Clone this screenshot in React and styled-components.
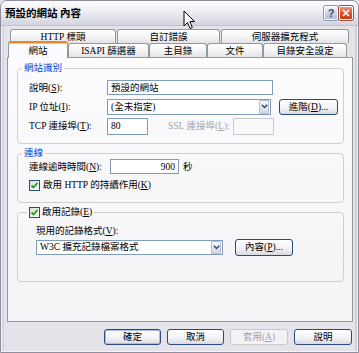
import React from "react";
import styled, { createGlobalStyle } from "styled-components";

const EstiloGlobal = createGlobalStyle`
  html, body { margin: 0; padding: 0; }
  body {
    background: #e4e3ea;
    font-family: "Liberation Serif", "Noto Sans CJK TC", serif;
    font-size: 9.5px;
    color: #000;
  }
`;

const Ventana = styled.div`
  position: relative;
  width: 359px;
  height: 353px;
  box-sizing: border-box;
  display: flex;
  flex-direction: column;
  background: #e4e3ea;
  border: 1px solid #8e8e9e;
  border-radius: 7px 7px 0 0;
  box-shadow: inset 0 0 0 1px #f4f4f8, inset -3px 0 0 #cfcfd9, inset 3px 0 0 #d6d6de;
  overflow: hidden;
`;

const BarraTitulo = styled.div`
  height: 25px;
  flex: none;
  box-sizing: border-box;
  display: flex;
  align-items: center;
  padding: 0 5px 0 4px;
  background: linear-gradient(#fdfdff 0%, #ededf3 45%, #d3d4de 100%);
  border-bottom: 1px solid #c2c2ce;
`;

const Titulo = styled.span`
  flex: 1;
  font-family: "Noto Sans CJK TC", sans-serif;
  font-weight: bold;
  font-size: 10.5px;
  line-height: 14px;
`;

const BotonVentana = styled.div`
  width: 14px;
  height: 14px;
  box-sizing: border-box;
  margin-left: 1px;
  display: flex;
  align-items: center;
  justify-content: center;
  border: 1px solid #fff;
  border-radius: 2px;
  background: ${(p) =>
    p.$cerrar
      ? "linear-gradient(#f09478, #d8532f 55%, #c23a18)"
      : "linear-gradient(#f2f5fc, #c9d3e8 55%, #aebbd8)"};
  box-shadow: 0 0 0 1px ${(p) => (p.$cerrar ? "#b04a30" : "#8d98b6")};
  font-family: "Liberation Sans", sans-serif;
  font-weight: bold;
  font-size: 11px;
  color: #3c4a6a;
`;

const Cuerpo = styled.div`
  flex: 1;
  display: flex;
  flex-direction: column;
  padding: 3px 5px 0 6px;
`;

const FilaPestanas = styled.div`
  display: flex;
  height: 14px;
  gap: ${(p) => p.$gap || 0}px;
  padding-left: ${(p) => p.$izq}px;
`;

const Pestana = styled.div`
  box-sizing: border-box;
  width: ${(p) => p.$w}px;
  height: 14px;
  flex: none;
  display: flex;
  align-items: center;
  justify-content: center;
  border: 1px solid #919b9c;
  border-bottom: none;
  border-radius: 3px 3px 0 0;
  background: linear-gradient(#ffffff, #f4f4f4 55%, #e3e3e8);
  line-height: 12px;
  white-space: nowrap;
`;

const PestanaActiva = styled(Pestana)`
  height: 17px;
  margin-top: -2px;
  position: relative;
  z-index: 1;
  border-top: 2px solid #e68b2c;
  box-shadow: inset 0 1px 0 #ffc83c;
  background: #fcfcfe;
`;

const Panel = styled.div`
  box-sizing: border-box;
  height: 265px;
  flex: none;
  border: 1px solid #919b9c;
  background: linear-gradient(#fcfcfe, #f3f3f6);
  padding: 4px 8px 0 9px;
  display: flex;
  flex-direction: column;
  gap: 3px;
`;

const Grupo = styled.fieldset`
  margin: 0;
  min-width: 0;
  border: 1px solid #d0d0c4;
  border-radius: 4px;
  padding: ${(p) => p.$pt || 0}px 8px ${(p) => p.$pb}px ${(p) => p.$pl}px;
`;

const Leyenda = styled.legend`
  padding: 0 2px;
  margin-left: ${(p) => p.$ml}px;
  color: ${(p) => (p.$azul ? "#0046d5" : "#000")};
  line-height: 12px;
  height: 12px;
  display: flex;
  align-items: center;
  gap: 2px;
`;

const Fila = styled.div`
  display: flex;
  align-items: center;
  height: ${(p) => p.$h || 19}px;
  gap: ${(p) => p.$gap || 0}px;
`;

const Etiqueta = styled.span`
  width: ${(p) => (p.$w ? `${p.$w}px` : "auto")};
  flex: none;
  white-space: nowrap;
  line-height: 12px;
  margin-left: ${(p) => p.$ml || 0}px;
  color: ${(p) => (p.$off ? "#a4a4ac" : "#000")};
`;

const Campo = styled.div`
  box-sizing: border-box;
  width: ${(p) => p.$w}px;
  height: ${(p) => p.$h || 15}px;
  flex: none;
  display: flex;
  align-items: center;
  justify-content: ${(p) => (p.$der ? "flex-end" : "flex-start")};
  padding: 0 3px;
  border: 1px solid ${(p) => (p.$off ? "#c9c9d0" : "#7f9db9")};
  background: ${(p) => (p.$off ? "transparent" : "#fff")};
  line-height: 12px;
  white-space: nowrap;
`;

const Lista = styled(Campo)`
  padding-right: 1px;
  justify-content: space-between;
`;

const Flecha = styled.div`
  width: 10px;
  height: ${(p) => p.$h}px;
  box-sizing: border-box;
  display: flex;
  align-items: center;
  justify-content: center;
  border: 1px solid #b7bccb;
  border-radius: 1px;
  background: linear-gradient(#f6f7fb, #d4d8e4);
`;

const Boton = styled.div`
  box-sizing: border-box;
  width: ${(p) => p.$w || 57}px;
  height: ${(p) => p.$h || 16}px;
  flex: none;
  margin-left: ${(p) => p.$ml || 0}px;
  display: flex;
  align-items: center;
  justify-content: center;
  border: 1px solid ${(p) => (p.$off ? "#c9c8cf" : "#2c4a78")};
  border-radius: 3px;
  background: ${(p) =>
    p.$off ? "#f3f2f6" : "linear-gradient(#ffffff, #f1f1f5 60%, #d9d9e3)"};
  box-shadow: ${(p) => (p.$defecto ? "inset 0 0 0 1px #a9c0ea" : "none")};
  color: ${(p) => (p.$off ? "#a6a5ad" : "#000")};
  line-height: 12px;
  white-space: nowrap;
`;

const CajaMarca = styled.div`
  width: 11px;
  height: 11px;
  box-sizing: border-box;
  flex: none;
  display: flex;
  align-items: center;
  justify-content: center;
  border: 1px solid #1c5180;
  background: linear-gradient(135deg, #dcdcd7, #ffffff);
`;

const FilaBotones = styled.div`
  display: flex;
  justify-content: flex-end;
  gap: 6px;
  margin-top: 7px;
  padding-right: 1px;
`;

const Puntero = styled.svg`
  position: absolute;
  left: 182px;
  top: 9px;
`;

const Tecla = ({ k }) => <u>{k}</u>;

const Marca = () => (
  <CajaMarca>
    <svg width="9" height="9" viewBox="0 0 9 9">
      <path d="M1.5 4.5 L3.5 6.5 L7.5 1.8" fill="none" stroke="#21a121" strokeWidth="1.8" />
    </svg>
  </CajaMarca>
);

const FlechaAbajo = ({ h }) => (
  <Flecha $h={h}>
    <svg width="7" height="5" viewBox="0 0 7 5">
      <path d="M0.8 0.8 L3.5 3.6 L6.2 0.8" fill="none" stroke="#34466a" strokeWidth="1.4" />
    </svg>
  </Flecha>
);

export default function App() {
  return (
    <>
      <EstiloGlobal />
      <Ventana>
        <BarraTitulo>
          <Titulo>預設的網站 內容</Titulo>
          <BotonVentana>?</BotonVentana>
          <BotonVentana $cerrar>
            <svg width="8" height="8" viewBox="0 0 8 8">
              <path d="M1 1 L7 7 M7 1 L1 7" stroke="#fff" strokeWidth="1.6" />
            </svg>
          </BotonVentana>
        </BarraTitulo>

        <Cuerpo>
          <FilaPestanas $izq={3} $gap={1}>
            <Pestana $w={106}>HTTP 標頭</Pestana>
            <Pestana $w={103}>自訂錯誤</Pestana>
            <Pestana $w={128}>伺服器擴充程式</Pestana>
          </FilaPestanas>
          <FilaPestanas $izq={1}>
            <PestanaActiva $w={60}>網站</PestanaActiva>
            <Pestana $w={81}>ISAPI 篩選器</Pestana>
            <Pestana $w={58}>主目錄</Pestana>
            <Pestana $w={56}>文件</Pestana>
            <Pestana $w={84}>目錄安全設定</Pestana>
          </FilaPestanas>

          <Panel>
            <Grupo $pl={11} $pt={4} $pb={7}>
              <Leyenda $azul $ml={-7}>網站識別</Leyenda>
              <Fila>
                <Etiqueta $w={78}>說明(<Tecla k="S" />):</Etiqueta>
                <Campo $w={166} $h={15}>預設的網站</Campo>
              </Fila>
              <Fila>
                <Etiqueta $w={78}>IP 位址(<Tecla k="I" />):</Etiqueta>
                <Lista $w={164} $h={16}>
                  (全未指定)
                  <FlechaAbajo h={14} />
                </Lista>
                <Boton $w={59} $ml={8}>進階(<Tecla k="D" />)...</Boton>
              </Fila>
              <Fila $h={20}>
                <Etiqueta $w={78}>TCP 連接埠(<Tecla k="T" />):</Etiqueta>
                <Campo $w={41} $h={17}>80</Campo>
                <Etiqueta $w={65} $ml={20} $off>
                  SSL 連接埠(<Tecla k="L" />):
                </Etiqueta>
                <Campo $w={41} $h={17} $off />
              </Fila>
            </Grupo>

            <Grupo $pl={11} $pt={0} $pb={6}>
              <Leyenda $azul $ml={-7}>連線</Leyenda>
              <Fila $h={15}>
                <Etiqueta $w={81}>連線逾時時間(<Tecla k="N" />):</Etiqueta>
                <Campo $w={69} $h={15} $der>900</Campo>
                <Etiqueta $ml={4}>秒</Etiqueta>
              </Fila>
              <Fila $h={22} $gap={3}>
                <Marca />
                <Etiqueta>啟用 HTTP 的持續作用(<Tecla k="K" />)</Etiqueta>
              </Fila>
            </Grupo>

            <Grupo $pl={18} $pt={6} $pb={25}>
              <Leyenda $ml={-9}>
                <Marca />
                <span>啟用記錄(<Tecla k="E" />)</span>
              </Leyenda>
              <Fila $h={14}>
                <Etiqueta>現用的記錄格式(<Tecla k="V" />):</Etiqueta>
              </Fila>
              <Fila $h={18} $gap={12}>
                <Lista $w={187} $h={15}>
                  W3C 擴充記錄檔案格式
                  <FlechaAbajo h={13} />
                </Lista>
                <Boton $w={58} $h={17}>內容(<Tecla k="P" />)...</Boton>
              </Fila>
            </Grupo>
          </Panel>

          <FilaBotones>
            <Boton $defecto>確定</Boton>
            <Boton>取消</Boton>
            <Boton $w={58} $off>套用(<Tecla k="A" />)</Boton>
            <Boton $w={58}>說明</Boton>
          </FilaBotones>
        </Cuerpo>

        <Puntero width="13" height="20" viewBox="0 0 13 20">
          <path
            d="M1 1 L1 16 L4.5 12.5 L7 18.5 L9.3 17.5 L6.8 11.6 L11.5 11.6 Z"
            fill="#fff"
            stroke="#000"
            strokeWidth="1"
            strokeLinejoin="round"
          />
        </Puntero>
      </Ventana>
    </>
  );
}
